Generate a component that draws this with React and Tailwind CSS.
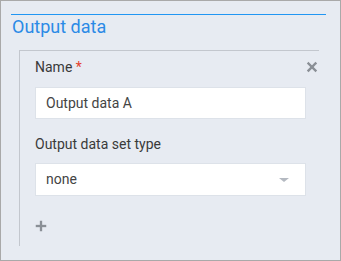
import { X, Plus } from "lucide-react";

export default function App() {
  return (
    <div
      className="w-[341px] h-[261px] border border-[#a9a9a9] bg-[#e7ebf2] overflow-hidden"
      style={{ fontFamily: "Roboto, 'Liberation Sans', sans-serif" }}
    >
      <div className="ml-[10px] w-[315px] mt-[13px] border-t border-[#2196f3]">
        <h2 className="text-[18px] leading-[20px] text-[#2b8ae6] pl-[1px] mt-[2px]">
          Output data
        </h2>
      </div>
      <div className="ml-[18px] mt-[13px] w-[300px] h-[196px] border-t border-l border-[#c3c7ce] relative pl-[15px] pt-[8px]">
        <button className="absolute right-0 top-[9px] text-[#8a8f96]">
          <X size={14} strokeWidth={4} strokeLinecap="square" />
        </button>
        <label className="block text-[14px] leading-[17px] text-[#3a3a3a]">
          Name <span className="text-[#e5412d]">*</span>
        </label>
        <div className="mt-[11px] w-[271px] h-[32px] bg-white border border-[#dde2e9] flex items-center px-[10px] text-[14px] text-[#444]">
          Output data A
        </div>
        <label className="block mt-[17px] text-[14px] leading-[17px] text-[#3a3a3a]">
          Output data set type
        </label>
        <div className="mt-[10px] w-[271px] h-[33px] bg-white border border-[#dde2e9] flex items-center justify-between px-[10px] text-[14px] text-[#444]">
          <span>none</span>
          <span className="w-0 h-0 border-l-[5px] border-r-[5px] border-t-[4px] border-l-transparent border-r-transparent border-t-[#b4b9c1] mr-[6px]" />
        </div>
        <div className="mt-[23px] text-[#8a8f96] -ml-[1px]">
          <Plus size={14} strokeWidth={4} strokeLinecap="square" />
        </div>
      </div>
    </div>
  );
}
